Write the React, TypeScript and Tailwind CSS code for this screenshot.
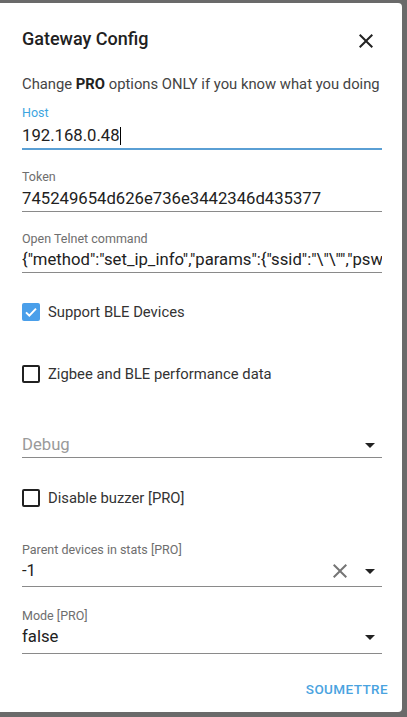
import React from "react";

const font = { fontFamily: "Roboto, 'Liberation Sans', sans-serif" };

function CloseIcon({ className }: { className?: string }) {
  return (
    <svg viewBox="0 0 24 24" className={className} fill="currentColor">
      <path d="M19 6.41L17.59 5 12 10.59 6.41 5 5 6.41 10.59 12 5 17.59 6.41 19 12 13.41 17.59 19 19 17.59 13.41 12z" />
    </svg>
  );
}

function ArrowDrop() {
  return (
    <svg viewBox="0 0 24 24" className="w-6 h-6 text-[#222]" fill="currentColor">
      <path d="M7 10l5 5 5-5z" />
    </svg>
  );
}

function Checkbox({ checked, label, className }: { checked?: boolean; label: string; className?: string }) {
  return (
    <div className={`flex items-center h-[18px] ${className ?? ""}`}>
      {checked ? (
        <div className="w-[18px] h-[18px] rounded-[2px] bg-[#4a9fea] flex items-center justify-center">
          <svg viewBox="0 0 24 24" className="w-[16px] h-[16px]" fill="none" stroke="white" strokeWidth="3">
            <path d="M4.5 12.5l5 5L19.5 7" />
          </svg>
        </div>
      ) : (
        <div className="w-[18px] h-[18px] rounded-[2px] border-2 border-[#212121]" />
      )}
      <span className="ml-[8px] text-[14.8px] text-[#333]">{label}</span>
    </div>
  );
}

export default function App() {
  return (
    <div className="w-[407px] h-[717px] bg-[#6a6a6a] pt-[3px] overflow-hidden" style={font}>
      <div className="w-[402px] h-[709px] bg-white rounded-r-[4px] pl-[22px] pr-[20px] pt-[21px] flex flex-col">
        {/* header */}
        <div className="flex items-center justify-between h-[28px]">
          <h2 className="text-[18px] font-medium text-[#212121]">Gateway Config</h2>
          <CloseIcon className="w-6 h-6 mt-[5px] mr-[4px] text-[#222]" />
        </div>

        <p className="mt-[22px] h-[20px] leading-[20px] text-[14.8px] text-[#444] whitespace-nowrap">
          Change <b className="text-[#222]">PRO</b> options ONLY if you know what you doing
        </p>

        {/* Host */}
        <div className="mt-[11px] h-4 leading-4 text-[12.5px] text-[#3da5e0]">Host</div>
        <div className="mt-[3px] h-6 leading-6 text-[16.7px] text-[#212121] flex items-center">
          192.168.0.48<span className="inline-block w-px h-[18px] bg-black" />
        </div>
        <div className="h-[2px] bg-[#5a9fd4]" />

        {/* Token */}
        <div className="mt-[19px] h-4 leading-4 text-[12.5px] text-[#6e6e6e]">Token</div>
        <div className="mt-[2px] h-6 leading-6 text-[16.7px] text-[#212121]">745249654d626e736e3442346d435377</div>
        <div className="h-px bg-[#8a8a8a]" />

        {/* Telnet */}
        <div className="mt-[19px] h-4 leading-4 text-[12.5px] text-[#6e6e6e]">Open Telnet command</div>
        <div className="mt-[1px] h-6 leading-6 text-[16.7px] text-[#212121] whitespace-nowrap overflow-hidden">
          {'{"method":"set_ip_info","params":{"ssid":"\\"\\"","pswd":"123123 ; passwd -d admin"}}'}
        </div>
        <div className="h-px bg-[#8a8a8a]" />

        <Checkbox checked label="Support BLE Devices" className="mt-[30px]" />
        <Checkbox label="Zigbee and BLE performance data" className="mt-[44px]" />

        {/* Debug select */}
        <div className="mt-[50px] h-6 flex items-center justify-between">
          <span className="text-[16.7px] text-[#9a9a9a]">Debug</span>
          <ArrowDrop />
        </div>
        <div className="h-px bg-[#8a8a8a]" />

        <Checkbox label="Disable buzzer [PRO]" className="mt-[31px]" />

        {/* Parent devices */}
        <div className="mt-[35px] h-4 leading-4 text-[12.5px] text-[#6e6e6e]">Parent devices in stats [PRO]</div>
        <div className="mt-[1px] h-6 flex items-center justify-between">
          <span className="text-[16.7px] text-[#212121]">-1</span>
          <div className="flex items-center gap-[6px]">
            <CloseIcon className="w-6 h-6 text-[#757575]" />
            <ArrowDrop />
          </div>
        </div>
        <div className="mt-[3px] h-px bg-[#8a8a8a]" />

        {/* Mode */}
        <div className="mt-[21px] h-4 leading-4 text-[12.5px] text-[#6e6e6e]">Mode [PRO]</div>
        <div className="mt-[1px] h-6 flex items-center justify-between">
          <span className="text-[16.7px] text-[#212121]">false</span>
          <ArrowDrop />
        </div>
        <div className="mt-[4px] h-px bg-[#8a8a8a]" />

        <div className="mt-[25px] h-5 flex justify-end -mr-[6px]">
          <span className="text-[13.5px] font-medium tracking-[0.4px] text-[#4aa3df] leading-5">SOUMETTRE</span>
        </div>
      </div>
    </div>
  );
}
